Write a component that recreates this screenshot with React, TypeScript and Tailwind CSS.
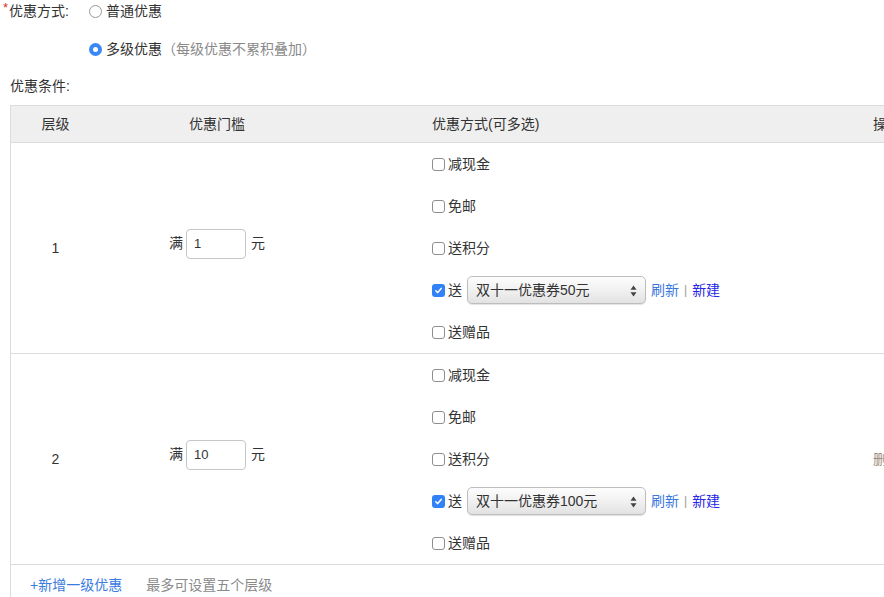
import React from "react";

const FONT = "font-['Liberation_Sans','Noto_Sans_CJK_SC',sans-serif]";

function Radio({ checked }: { checked?: boolean }) {
  if (checked) {
    return (
      <span className="flex h-[13px] w-[13px] items-center justify-center rounded-full bg-[#3b87f5]">
        <span className="h-[5px] w-[5px] rounded-full bg-white" />
      </span>
    );
  }
  return <span className="h-[13px] w-[13px] rounded-full border border-[#9a9a9a] bg-white" />;
}

function Checkbox({ checked }: { checked?: boolean }) {
  if (checked) {
    return (
      <span className="flex h-[13px] w-[13px] items-center justify-center rounded-[3px] bg-[#3182f6]">
        <svg width="9" height="9" viewBox="0 0 9 9" fill="none">
          <path d="M1.8 4.8 L3.7 6.6 L7.2 2.4" stroke="white" strokeWidth="1.5" strokeLinecap="round" strokeLinejoin="round" />
        </svg>
      </span>
    );
  }
  return <span className="h-[13px] w-[13px] rounded-[3px] border border-[#8e8e8e] bg-white" />;
}

function Select({ value }: { value: string }) {
  return (
    <div className="relative ml-[5px] flex h-[28px] w-[179px] items-center rounded-[5px] border border-[#bdbdbd] bg-gradient-to-b from-[#fdfdfd] via-[#f1f1f1] to-[#e2e2e2] pl-[8px] text-[14px] text-[#333] shadow-[0_1px_1px_rgba(0,0,0,0.12)]">
      <span>{value}</span>
      <svg className="absolute right-[8px] top-[8px]" width="7" height="12" viewBox="0 0 7 12">
        <path d="M3.5 0.5 L6.5 4.8 L0.5 4.8 Z" fill="#444" />
        <path d="M3.5 11.5 L6.5 7.2 L0.5 7.2 Z" fill="#444" />
      </svg>
    </div>
  );
}

function Option({ label }: { label: string }) {
  return (
    <div className="flex h-[42px] items-center">
      <Checkbox />
      <span className="ml-[3px]">{label}</span>
    </div>
  );
}

function Level({ n, amount, coupon, del }: { n: string; amount: string; coupon: string; del?: boolean }) {
  return (
    <div className="grid h-[211px] grid-cols-[89px_234px_523px_60px] border-b border-[#dcdcdc]">
      <div className="flex items-center justify-center">{n}</div>
      <div className="flex items-center justify-center">
        <div className="mb-[9px] flex items-center">
          <span>满</span>
          <div className="ml-[3px] flex h-[30px] w-[60px] items-center rounded-[4px] border border-[#c6c6c6] bg-white pl-[7px] text-[13px]">
            {amount}
          </div>
          <span className="ml-[5px]">元</span>
        </div>
      </div>
      <div className="flex flex-col pl-[98px]">
        <Option label="减现金" />
        <Option label="免邮" />
        <Option label="送积分" />
        <div className="flex h-[42px] items-center">
          <Checkbox checked />
          <span className="ml-[3px]">送</span>
          <Select value={coupon} />
          <span className="ml-[5px] text-[#3b78de]">刷新</span>
          <span className="mx-[5px] text-[12px] text-[#999]">|</span>
          <span className="text-[#2626e6]">新建</span>
        </div>
        <Option label="送赠品" />
      </div>
      <div className="flex items-center justify-center">
        {del ? <span className="text-[#a08c7c]">删除</span> : null}
      </div>
    </div>
  );
}

export default function App() {
  return (
    <div className={`h-[597px] w-[884px] overflow-hidden bg-white text-[14px] text-[#333] ${FONT}`}>
      <div className="flex h-[22px] items-center">
        <div className="flex w-[89px] items-center">
          <span className="ml-[3px] self-start text-[13px] leading-[14px] text-[#e0311d]">*</span>
          <span className="ml-[1px]">优惠方式:</span>
        </div>
        <Radio />
        <span className="ml-[4px]">普通优惠</span>
      </div>
      <div className="mt-[16px] flex h-[22px] items-center pl-[89px]">
        <Radio checked />
        <span className="ml-[4px]">多级优惠</span>
        <span className="text-[#8a8a8a]">（每级优惠不累积叠加）</span>
      </div>
      <div className="mt-[15px] flex h-[22px] items-center pl-[10px]">优惠条件:</div>
      <div className="ml-[10px] mt-[8px] w-[920px] border-l border-t border-[#dcdcdc]">
        <div className="grid h-[37px] grid-cols-[89px_234px_523px_60px] items-center border-b border-[#dcdcdc] bg-[#efefef]">
          <div className="text-center">层级</div>
          <div className="text-center">优惠门槛</div>
          <div className="pl-[98px]">优惠方式(可多选)</div>
          <div className="text-center">操作</div>
        </div>
        <Level n="1" amount="1" coupon="双十一优惠券50元" />
        <Level n="2" amount="10" coupon="双十一优惠券100元" del />
        <div className="flex h-[41px] items-center pl-[19px]">
          <span className="text-[#3a7be0]">+新增一级优惠</span>
          <span className="ml-[24px] text-[#8a8a8a]">最多可设置五个层级</span>
        </div>
      </div>
    </div>
  );
}
